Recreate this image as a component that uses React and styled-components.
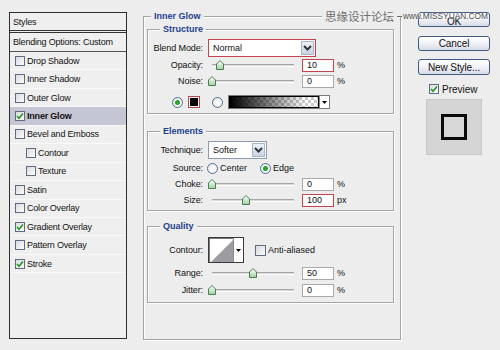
import React from 'react';
import styled, { createGlobalStyle } from 'styled-components';

const GlobalStyle = createGlobalStyle`
  html, body { margin: 0; padding: 0; background: #ededed; }
  body { font-family: "Liberation Sans", Arial, sans-serif; font-size: 9px; color: #111; }
  * { box-sizing: border-box; }
`;

const Window = styled.div`
  position: relative;
  width: 500px;
  height: 350px;
  background: #ededed;
  display: flex;
  align-items: flex-start;
  overflow: hidden;
`;

/* ---------- left styles list ---------- */
const StylesPanel = styled.div`
  margin: 12px 0 0 9px;
  width: 118px;
  height: 327px;
  border: 1px solid #2e2e2e;
  background: #efefef;
  display: flex;
  flex-direction: column;
`;

const PanelHeader = styled.div`
  height: 20px;
  padding-left: 3px;
  display: flex;
  align-items: center;
  border-bottom: 3px double #333;
  letter-spacing: -0.2px;
`;

const BlendingRow = styled.div`
  height: 19px;
  padding-left: 3px;
  display: flex;
  align-items: center;
  border-bottom: 1px solid #555;
  letter-spacing: -0.2px;
`;

const StyleItem = styled.div`
  height: 18.45px;
  flex: none;
  display: flex;
  align-items: center;
  gap: 2px;
  padding-left: ${(p) => (p.$indent ? 16 : 5)}px;
  background: ${(p) => (p.$active ? '#c5c6d3' : 'transparent')};
  font-weight: ${(p) => (p.$active ? 'bold' : 'normal')};
  border-bottom: 1px solid #f9f9f9;
  letter-spacing: -0.2px;
`;

const Box = styled.span`
  width: 10px;
  height: 10px;
  flex: none;
  border: 1px solid #5d6c80;
  background: linear-gradient(135deg, #d9dbe0, #fbfbfb);
  display: inline-flex;
  align-items: center;
  justify-content: center;
`;

const Check = ({ on }) => (
  <Box>
    {on && (
      <svg width="8" height="8" viewBox="0 0 8 8">
        <path d="M1 4 L3 6.2 L7 1.5" stroke="#1f9a1f" strokeWidth="1.6" fill="none" />
      </svg>
    )}
  </Box>
);

/* ---------- middle groups ---------- */
const Outer = styled.div`
  position: relative;
  margin: 16px 0 0 16px;
  width: 258px;
  height: 324px;
  border: 1px solid #a4a4a4;
  box-shadow: inset 1px 1px 0 #fff, 1px 1px 0 #fff;
  padding: 12px 6px 0 3px;
  display: flex;
  flex-direction: column;
`;

const Group = styled.div`
  position: relative;
  flex: none;
  width: 247px;
  height: ${(p) => p.$h}px;
  margin-top: ${(p) => p.$mt || 0}px;
  border: 1px solid #a4a4a4;
  box-shadow: inset 1px 1px 0 #fff, 1px 1px 0 #fff;
  padding-top: ${(p) => p.$pt}px;
  display: flex;
  flex-direction: column;
`;

const Legend = styled.span`
  position: absolute;
  top: -6px;
  left: ${(p) => p.$left}px;
  padding: 0 3px;
  background: #ededed;
  color: #1d3f8f;
  font-weight: bold;
  font-size: 9px;
  line-height: 11px;
`;

const Row = styled.div`
  display: flex;
  align-items: center;
  height: ${(p) => p.$h}px;
  margin-top: ${(p) => p.$mt || 0}px;
  flex: none;
`;

const Label = styled.span`
  width: 55px;
  margin-right: ${(p) => (p.$mr != null ? p.$mr : 5)}px;
  text-align: right;
  white-space: nowrap;
  letter-spacing: -0.1px;
`;

const Select = styled.div`
  width: ${(p) => p.$w}px;
  height: 18px;
  border: 1px solid ${(p) => (p.$hl ? '#c4434f' : '#8a9ab0')};
  background: #fff;
  display: flex;
  align-items: center;
  justify-content: space-between;
  padding: 1px;
  padding-left: 4px;
`;

const SelectBtn = styled.span`
  width: 13px;
  height: 14px;
  border: 1px solid #a8b4c8;
  background: linear-gradient(#eef2f8, #c9d2e2);
  display: inline-flex;
  align-items: center;
  justify-content: center;
`;

const Chevron = () => (
  <svg width="9" height="6" viewBox="0 0 9 6">
    <path d="M1 1 L4.5 4.5 L8 1" stroke="#2f3440" strokeWidth="2" fill="none" />
  </svg>
);

const SliderWrap = styled.div`
  position: relative;
  width: 90px;
  height: 12px;
  display: flex;
  align-items: center;
`;

const Track = styled.div`
  margin: 0 4px;
  flex: 1;
  height: 3px;
  border-top: 1px solid #a6a6a6;
  border-bottom: 1px solid #fff;
  background: #d8d8d8;
`;

const ThumbBox = styled.span`
  position: absolute;
  top: 1px;
  width: 8px;
  height: 10px;
  display: block;
`;

const Slider = ({ pct }) => (
  <SliderWrap>
    <Track />
    <ThumbBox style={{ left: `${4 + pct * 82 - 4}px` }}>
      <svg width="8" height="10" viewBox="0 0 8 10">
        <defs>
          <linearGradient id="tg" x1="0" y1="0" x2="0" y2="1">
            <stop offset="0" stopColor="#ffffff" />
            <stop offset="1" stopColor="#9fd29f" />
          </linearGradient>
        </defs>
        <path d="M0.5 4 L4 0.5 L7.5 4 V9.5 H0.5 Z" fill="url(#tg)" stroke="#4a7d55" strokeWidth="1" />
      </svg>
    </ThumbBox>
  </SliderWrap>
);

const Field = styled.div`
  width: 32px;
  height: 13px;
  margin-left: 4px;
  border: 1px solid ${(p) => (p.$hl ? '#c4434f' : '#a9a9a9')};
  background: #fff;
  padding-left: 4px;
  line-height: 11px;
`;

const Unit = styled.span`
  margin-left: 3px;
`;

const Radio = styled.span`
  width: 11px;
  height: 11px;
  flex: none;
  border-radius: 50%;
  border: 1px solid #50708f;
  background: radial-gradient(circle at 60% 60%, #ffffff, #e2e4ea);
  margin-left: ${(p) => p.$ml || 0}px;
  display: inline-flex;
  align-items: center;
  justify-content: center;
  &::after {
    content: '';
    width: 5px;
    height: 5px;
    border-radius: 50%;
    background: ${(p) => (p.$on ? '#2aa32a' : 'transparent')};
  }
`;

const RadioText = styled.span`
  margin-left: 2px;
  margin-right: ${(p) => p.$mr || 0}px;
`;

const Swatch = styled.span`
  width: 12px;
  height: 12px;
  margin-left: 5px;
  border: 1px solid #c4434f;
  padding: 1px;
  background: #fff;
  display: inline-flex;
  &::after {
    content: '';
    flex: 1;
    background: #0d0506;
  }
`;

const GradientPick = styled.div`
  width: 102px;
  height: 14px;
  margin-left: 5px;
  display: flex;
  border: 1px solid #7a7a7a;
  background: #fff;
`;

const GradientBar = styled.div`
  flex: 1;
  border: 1px solid #000;
  background:
    linear-gradient(to right, #000 0%, rgba(0, 0, 0, 0.6) 35%, rgba(0, 0, 0, 0) 85%),
    repeating-conic-gradient(#c9c9c9 0% 25%, #fff 0% 50%) 0 0 / 6px 6px;
`;

const DropPart = styled.span`
  width: 10px;
  flex: none;
  background: #fff;
  border-left: 1px solid #8a8a8a;
  display: inline-flex;
  align-items: center;
  justify-content: center;
`;

const TriDown = () => (
  <svg width="5" height="3" viewBox="0 0 5 3">
    <path d="M0 0 H5 L2.5 3 Z" fill="#000" />
  </svg>
);

const ContourPick = styled.div`
  width: 36px;
  height: 26px;
  display: flex;
  border: 1px solid #3a3a3a;
  box-shadow: inset 1px 1px 0 #777;
  background: #fff;
`;

const ContourGraph = styled.div`
  width: 24px;
  display: flex;
  align-items: stretch;
  padding: 2px 0 1px 2px;
`;

const AntiBox = styled.span`
  margin-left: 11px;
  display: inline-flex;
  align-items: center;
  gap: 2px;
  & > span:first-child {
    width: 11px;
    height: 11px;
  }
`;

/* ---------- right column ---------- */
const RightCol = styled.div`
  margin: 12px 0 0 17px;
  width: 72px;
  display: flex;
  flex-direction: column;
`;

const Button = styled.div`
  height: ${(p) => p.$h}px;
  margin-top: ${(p) => p.$mt || 0}px;
  border: 1px solid #3f5a86;
  border-radius: 3px;
  background: linear-gradient(#ffffff, #f1f2f6 50%, #d6dbe8);
  font-size: 10px;
  display: flex;
  align-items: center;
  justify-content: center;
  letter-spacing: -0.1px;
  padding-top: ${(p) => p.$pt || 0}px;
`;

const PreviewRow = styled.div`
  margin: 9px 0 0 11px;
  height: 10px;
  display: flex;
  align-items: center;
  gap: 3px;
  font-size: 10px;
`;

const PreviewBox = styled.div`
  margin: 5px 0 0 8px;
  width: 56px;
  height: 56px;
  background: #d5d5d5;
  border: 1px solid #c7c7c7;
  display: flex;
  align-items: center;
  justify-content: center;
`;

const PreviewSquare = styled.div`
  width: 26px;
  height: 26px;
  border: 3px solid #0a0a0a;
  background: #d7d7d7;
`;

/* ---------- watermark ---------- */
const Watermark = styled.div`
  position: absolute;
  top: 7px;
  left: 322px;
  width: max-content;
  display: flex;
  align-items: center;
  height: 18px;
  white-space: nowrap;
`;

const WmCn = styled.span`
  flex: none;
  font-family: "Noto Sans CJK SC", sans-serif;
  font-size: 11.5px;
  color: #6e6e6e;
  background: #ededed;
  padding: 0 3px;
  line-height: 18px;
  white-space: nowrap;
`;

const WmDash = styled.span`
  flex: none;
  width: 5px;
  height: 1px;
  background: #666;
`;

const WmEn = styled.span`
  flex: none;
  font-size: 8.3px;
  color: #4a4a4a;
  margin-left: 1px;
  white-space: nowrap;
  text-shadow: 0 0 1px #fff, 0 0 1px #fff;
`;

const items = [
  ['Drop Shadow', false],
  ['Inner Shadow', false],
  ['Outer Glow', false],
  ['Inner Glow', true, false, true],
  ['Bevel and Emboss', false],
  ['Contour', false, true],
  ['Texture', false, true],
  ['Satin', false],
  ['Color Overlay', false],
  ['Gradient Overlay', true],
  ['Pattern Overlay', false],
  ['Stroke', true],
];

export default function App() {
  return (
    <>
      <GlobalStyle />
      <Window>
        <StylesPanel>
          <PanelHeader>Styles</PanelHeader>
          <BlendingRow>Blending Options: Custom</BlendingRow>
          {items.map(([name, on, indent, active]) => (
            <StyleItem key={name} $indent={indent} $active={active}>
              <Check on={on} />
              <span>{name}</span>
            </StyleItem>
          ))}
        </StylesPanel>

        <Outer>
          <Legend $left={7}>Inner Glow</Legend>

          <Group $h={85} $pt={9}>
            <Legend $left={12}>Structure</Legend>
            <Row $h={18}>
              <Label>Blend Mode:</Label>
              <Select $w={108} $hl>
                <span>Normal</span>
                <SelectBtn><Chevron /></SelectBtn>
              </Select>
            </Row>
            <Row $h={14} $mt={1}>
              <Label>Opacity:</Label>
              <Slider pct={0.1} />
              <Field $hl>10</Field>
              <Unit>%</Unit>
            </Row>
            <Row $h={14} $mt={2}>
              <Label>Noise:</Label>
              <Slider pct={0} />
              <Field>0</Field>
              <Unit>%</Unit>
            </Row>
            <Row $h={14} $mt={7}>
              <Radio $on $ml={24} />
              <Swatch />
              <Radio $ml={12} />
              <GradientPick>
                <GradientBar />
                <DropPart><TriDown /></DropPart>
              </GradientPick>
            </Row>
          </Group>

          <Group $h={80} $mt={17} $pt={9}>
            <Legend $left={12}>Elements</Legend>
            <Row $h={18}>
              <Label>Technique:</Label>
              <Select $w={59}>
                <span>Softer</span>
                <SelectBtn><Chevron /></SelectBtn>
              </Select>
            </Row>
            <Row $h={14} $mt={2}>
              <Label $mr={4}>Source:</Label>
              <Radio />
              <RadioText $mr={13}>Center</RadioText>
              <Radio $on />
              <RadioText>Edge</RadioText>
            </Row>
            <Row $h={14} $mt={2}>
              <Label>Choke:</Label>
              <Slider pct={0} />
              <Field>0</Field>
              <Unit>%</Unit>
            </Row>
            <Row $h={14} $mt={2}>
              <Label>Size:</Label>
              <Slider pct={0.42} />
              <Field $hl>100</Field>
              <Unit>px</Unit>
            </Row>
          </Group>

          <Group $h={77} $mt={15} $pt={10}>
            <Legend $left={12}>Quality</Legend>
            <Row $h={26}>
              <Label>Contour:</Label>
              <ContourPick>
                <ContourGraph>
                  <svg width="22" height="22" viewBox="0 0 22 22" preserveAspectRatio="none">
                    <polygon points="0,22 22,0 22,22" fill="#9c9ca2" />
                  </svg>
                </ContourGraph>
                <DropPart><TriDown /></DropPart>
              </ContourPick>
              <AntiBox>
                <Box />
                <span>Anti-aliased</span>
              </AntiBox>
            </Row>
            <Row $h={14} $mt={3}>
              <Label>Range:</Label>
              <Slider pct={0.5} />
              <Field>50</Field>
              <Unit>%</Unit>
            </Row>
            <Row $h={14} $mt={3}>
              <Label>Jitter:</Label>
              <Slider pct={0} />
              <Field>0</Field>
              <Unit>%</Unit>
            </Row>
          </Group>
        </Outer>

        <RightCol>
          <Button $h={15} $pt={3}>OK</Button>
          <Button $h={15} $mt={9}>Cancel</Button>
          <Button $h={16} $mt={8}>New Style...</Button>
          <PreviewRow>
            <Check on />
            <span>Preview</span>
          </PreviewRow>
          <PreviewBox>
            <PreviewSquare />
          </PreviewBox>
        </RightCol>

        <Watermark>
          <WmCn>思缘设计论坛</WmCn>
          <WmDash />
          <WmEn>www.MISSYUAN.COM</WmEn>
        </Watermark>
      </Window>
    </>
  );
}
